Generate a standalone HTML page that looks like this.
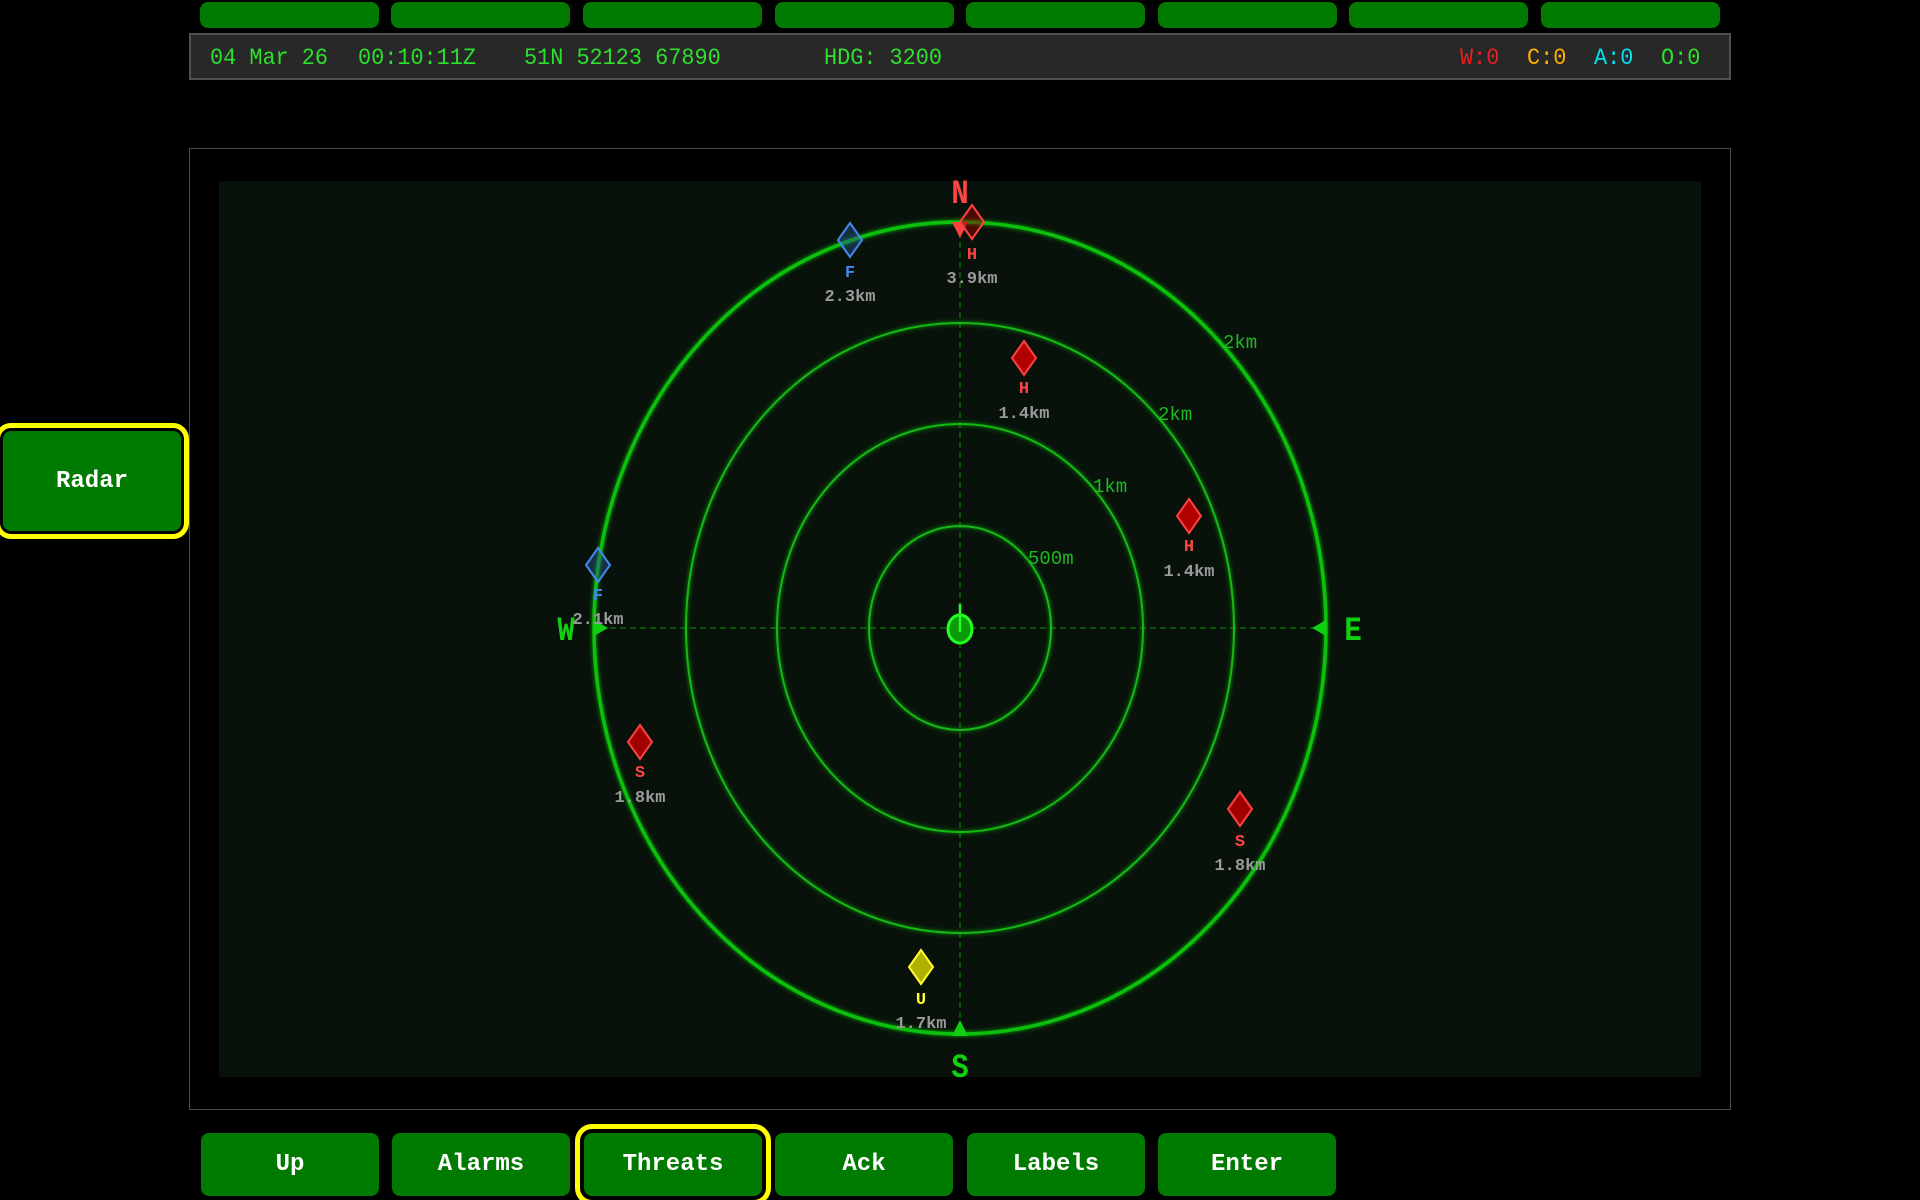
<!DOCTYPE html>
<html><head><meta charset="utf-8"><style>
*{margin:0;padding:0;box-sizing:border-box}
body{width:1920px;height:1200px;background:#000;position:relative;overflow:hidden;font-family:"Liberation Mono",monospace}
.tb{position:absolute;top:2px;width:179px;height:26px;background:#007a00;border-radius:8px}
.hdr{position:absolute;left:189px;top:33px;width:1542px;height:47px;background:#282828;border:2px solid #505050}
.hdr span{position:absolute;top:10px;font-size:23px;color:#2ee02e;white-space:pre;transform:scaleX(0.95);transform-origin:left}
.panel{position:absolute;left:189px;top:148px;width:1542px;height:962px;border:1px solid #4a4a4a}
.btn{position:absolute;top:1133px;width:178px;height:63px;background:#007a00;border-radius:8px;color:#fff;font:bold 24px "Liberation Mono",monospace;display:flex;align-items:center;justify-content:center}
.sel{outline:5px solid #ffff00;outline-offset:5px;border-radius:8px}
</style></head><body>
<div class="tb" style="left:200px"></div><div class="tb" style="left:391px"></div><div class="tb" style="left:583px"></div><div class="tb" style="left:775px"></div><div class="tb" style="left:966px"></div><div class="tb" style="left:1158px"></div><div class="tb" style="left:1349px"></div><div class="tb" style="left:1541px"></div>
<div class="hdr">
<span style="left:19px">04 Mar 26</span><span style="left:167px">00:10:11Z</span><span style="left:333px">51N 52123 67890</span><span style="left:633px">HDG: 3200</span>
<span style="left:1269px;color:#e82020">W:0</span><span style="left:1336px;color:#ffb000">C:0</span><span style="left:1403px;color:#00e0f0">A:0</span><span style="left:1470px">O:0</span>
</div>
<div class="panel"></div>
<svg style="position:absolute;left:0;top:0" width="1920" height="1200" font-family="Liberation Mono, monospace">
<defs><filter id="g" x="-10%" y="-10%" width="120%" height="120%"><feGaussianBlur stdDeviation="2" result="b"/><feMerge><feMergeNode in="b"/><feMergeNode in="SourceGraphic"/></feMerge></filter></defs>
<rect x="219" y="181" width="1482" height="896" fill="#08120a"/>
<g stroke="#0a6a0a" stroke-width="1.5" stroke-dasharray="6 4"><line x1="600" y1="628" x2="1320" y2="628"/><line x1="960" y1="222" x2="960" y2="1034"/></g>
<g fill="none" filter="url(#g)">
<ellipse cx="960" cy="628" rx="366" ry="406" stroke="#10c010" stroke-width="3.5"/>
<ellipse cx="960" cy="628" rx="274" ry="305" stroke="#12b812" stroke-width="2"/>
<ellipse cx="960" cy="628" rx="183" ry="204" stroke="#12b812" stroke-width="2"/>
<ellipse cx="960" cy="628" rx="91" ry="102" stroke="#12b812" stroke-width="2"/>
</g>
<g fill="#1fb81f" font-size="19"><text x="1223" y="348">2km</text><text x="1158" y="420">2km</text><text x="1093" y="492">1km</text><text x="1028" y="564">500m</text></g>
<g font-size="34" font-weight="bold" text-anchor="middle">
<text x="960" y="203" fill="#ff4444" transform="translate(960 0) scale(0.85 1) translate(-960 0)">N</text>
<text x="960" y="1077" fill="#10d010" transform="translate(960 0) scale(0.85 1) translate(-960 0)">S</text>
<text x="566" y="640" fill="#10d010" transform="translate(566 0) scale(0.85 1) translate(-566 0)">W</text>
<text x="1353" y="640" fill="#10d010" transform="translate(1353 0) scale(0.85 1) translate(-1353 0)">E</text>
</g>
<polygon points="952,222 968,222 960,238" fill="#ff4040"/>
<polygon points="952,1036 968,1036 960,1020" fill="#10d010"/>
<polygon points="594,620 594,636 608,628" fill="#10d010"/>
<polygon points="1326,620 1326,636 1312,628" fill="#10d010"/>
<ellipse cx="960" cy="629" rx="12" ry="14" fill="#0a9a0a" stroke="#22ff22" stroke-width="3"/>
<line x1="960" y1="604" x2="960" y2="632" stroke="#22ff22" stroke-width="2.5"/>
<g font-size="17" text-anchor="middle" font-weight="bold">
<polygon points="972,205 984,222 972,239 960,222" fill="rgba(140,0,0,0.5)" stroke="#ff4040" stroke-width="2"/>
<text x="972" y="259" fill="#ff4444">H</text><text x="972" y="283" fill="#9a9a9a">3.9km</text>
<polygon points="850,223 862,240 850,257 838,240" fill="rgba(40,80,140,0.45)" stroke="#4488ee" stroke-width="2"/>
<text x="850" y="277" fill="#4488ee">F</text><text x="850" y="301" fill="#9a9a9a">2.3km</text>
<polygon points="1024,341 1036,358 1024,375 1012,358" fill="#b00000" stroke="#ff4040" stroke-width="2"/>
<text x="1024" y="393" fill="#ff4444">H</text><text x="1024" y="418" fill="#9a9a9a">1.4km</text>
<polygon points="1189,499 1201,516 1189,533 1177,516" fill="#b00000" stroke="#ff4040" stroke-width="2"/>
<text x="1189" y="551" fill="#ff4444">H</text><text x="1189" y="576" fill="#9a9a9a">1.4km</text>
<polygon points="598,548 610,565 598,582 586,565" fill="rgba(40,80,140,0.45)" stroke="#4488ee" stroke-width="2"/>
<text x="598" y="600" fill="#4488ee">F</text><text x="598" y="624" fill="#9a9a9a">2.1km</text>
<polygon points="640,725 652,742 640,759 628,742" fill="#a00000" stroke="#ff4040" stroke-width="2"/>
<text x="640" y="777" fill="#ff4444">S</text><text x="640" y="802" fill="#9a9a9a">1.8km</text>
<polygon points="1240,792 1252,809 1240,826 1228,809" fill="#a00000" stroke="#ff4040" stroke-width="2"/>
<text x="1240" y="846" fill="#ff4444">S</text><text x="1240" y="870" fill="#9a9a9a">1.8km</text>
<polygon points="921,950 933,967 921,984 909,967" fill="#b0b000" stroke="#ffff30" stroke-width="2"/>
<text x="921" y="1004" fill="#ffff30">U</text><text x="921" y="1028" fill="#9a9a9a">1.7km</text>
</g>
</svg>
<div class="btn sel" style="left:3px;top:431px;width:178px;height:100px;outline-offset:3px">Radar</div>
<div class="btn" style="left:201px">Up</div>
<div class="btn" style="left:392px">Alarms</div>
<div class="btn sel" style="left:584px;outline-offset:4px">Threats</div>
<div class="btn" style="left:775px">Ack</div>
<div class="btn" style="left:967px">Labels</div>
<div class="btn" style="left:1158px">Enter</div>
</body></html>
